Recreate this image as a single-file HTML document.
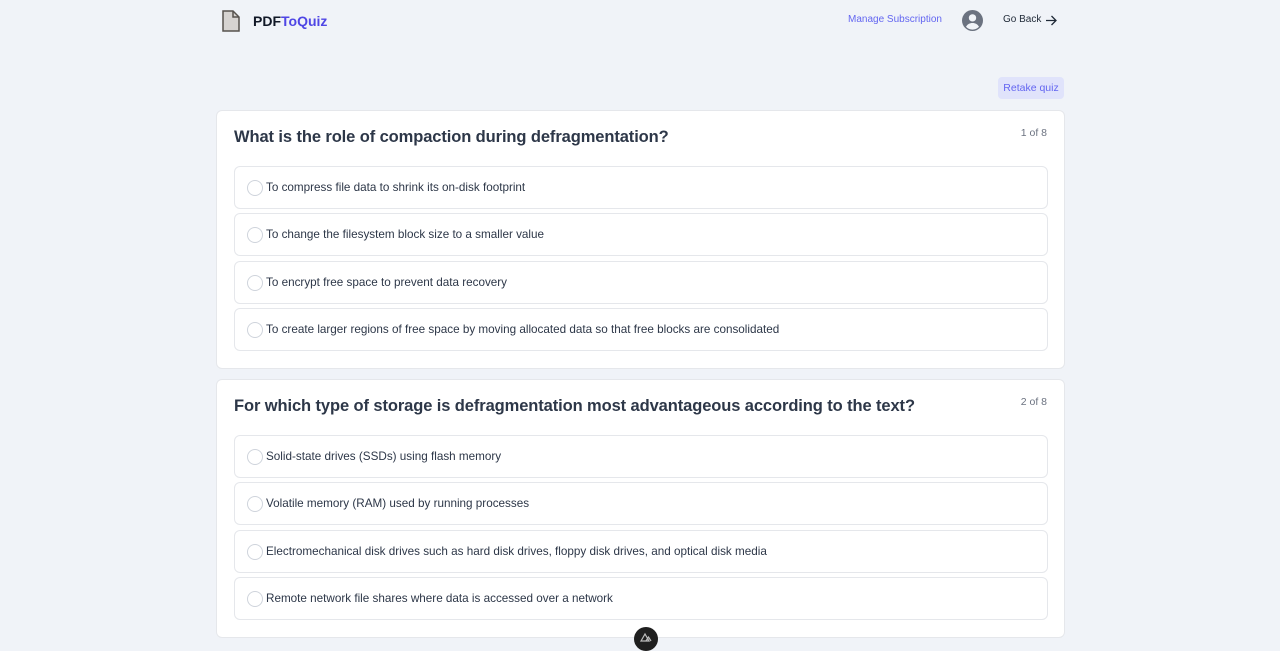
<!DOCTYPE html>
<html><head><meta charset="utf-8"><style>
*{box-sizing:border-box;margin:0;padding:0}
body{width:1280px;height:645px;overflow:hidden;background:#f0f3f8;font-family:"Liberation Sans",sans-serif;color:#1f2937;position:relative}
.logo{position:absolute;left:221px;top:10px;display:flex;align-items:center}
.logo .t{margin-left:12px;font-weight:bold;font-size:14px;color:#111827}
.logo .t span{color:#4f46e5}
.nav{position:absolute;top:14px;font-size:10px}
.retake{position:absolute;left:998px;top:77px;width:66px;height:22px;background:#e0e3fb;border-radius:4px;color:#6366f1;font-size:10.5px;text-align:center;line-height:22px}
.card{position:absolute;left:216px;width:849px;background:#fff;border:1px solid #e5e7eb;border-radius:6px}
.card h2{position:absolute;left:17px;top:17px;font-size:16.5px;font-weight:bold;color:#2d3748;letter-spacing:-0.1px}
.card .n{position:absolute;right:17px;top:16px;font-size:10.5px;color:#6b7280}
.opt{position:absolute;left:17px;width:814px;height:43px;border:1px solid #e5e7eb;border-radius:6px;font-size:11.7px;color:#2d3748;line-height:41px;padding-left:31px}
.opt:before{content:"";position:absolute;left:12px;top:13px;width:14px;height:14px;border:1px solid #cfd4dc;border-radius:50%}
</style></head><body>
<div class="logo"><svg width="20" height="22" viewBox="0 0 20 22"><path d="M2 1h10l6 6v14H2z" fill="#d6d3d1" stroke="#57534e" stroke-width="1.5"/><path d="M12 1v6h6" fill="none" stroke="#57534e" stroke-width="1.5"/></svg><div class="t">PDF<span>ToQuiz</span></div></div>
<div class="nav" style="left:848px;color:#6366f1">Manage Subscription</div>
<svg style="position:absolute;left:962px;top:10px" width="21" height="21" viewBox="0 0 20 20"><circle cx="10" cy="10" r="10" fill="#6b7280"/><circle cx="10" cy="7.5" r="3.5" fill="#f0f3f8"/><path d="M3.8 16c1.5-2.6 3.6-3.6 6.2-3.6s4.7 1 6.2 3.6A8.5 8.5 0 0 1 3.8 16z" fill="#f0f3f8"/></svg>
<div class="nav" style="left:1003px;color:#1f2937">Go Back</div>
<svg style="position:absolute;left:1045px;top:15px" width="12" height="11" viewBox="0 0 12 11"><path d="M1 5.5h10M6.5 1l4.5 4.5L6.5 10" fill="none" stroke="#1f2937" stroke-width="1.3"/></svg>
<div class="retake">Retake quiz</div>
<div class="card" style="top:110px;height:259px">
<h2>What is the role of compaction during defragmentation?</h2><div class="n">1 of 8</div>
<div class="opt" style="top:55px">To compress file data to shrink its on-disk footprint</div>
<div class="opt" style="top:102px">To change the filesystem block size to a smaller value</div>
<div class="opt" style="top:150px">To encrypt free space to prevent data recovery</div>
<div class="opt" style="top:197px">To create larger regions of free space by moving allocated data so that free blocks are consolidated</div>
</div>
<div class="card" style="top:379px;height:259px">
<h2>For which type of storage is defragmentation most advantageous according to the text?</h2><div class="n">2 of 8</div>
<div class="opt" style="top:55px">Solid-state drives (SSDs) using flash memory</div>
<div class="opt" style="top:102px">Volatile memory (RAM) used by running processes</div>
<div class="opt" style="top:150px">Electromechanical disk drives such as hard disk drives, floppy disk drives, and optical disk media</div>
<div class="opt" style="top:197px">Remote network file shares where data is accessed over a network</div>
</div>
<div style="position:absolute;left:634px;top:627px;width:24px;height:24px;border-radius:50%;background:#1f1f1f"></div>
<svg style="position:absolute;left:640px;top:632px" width="12" height="10" viewBox="0 0 12 10"><path d="M1 9L5 2l4 7zM6 9l2.5-4L11 9" fill="none" stroke="#bbb" stroke-width="1.2"/></svg>
</body></html>
